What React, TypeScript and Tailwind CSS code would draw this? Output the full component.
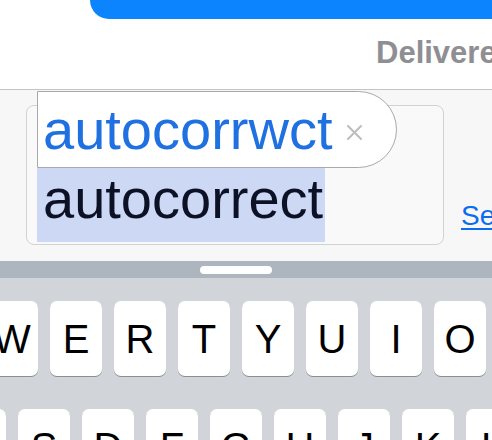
import React from 'react';

const row1 = ['Q', 'W', 'E', 'R', 'T', 'Y', 'U', 'I', 'O', 'P'];
const row2 = ['A', 'S', 'D', 'F', 'G', 'H', 'J', 'K', 'L'];

const Key = ({ label }: { label: string }) => (
  <div className="w-[52px] h-[75px] shrink-0 rounded-[7px] bg-white shadow-[0_1px_0_#8b8d92] flex items-center justify-center text-[40px] leading-none text-black">
    {label}
  </div>
);

export default function App() {
  return (
    <div className="w-[492px] h-[440px] overflow-hidden bg-white font-['Liberation_Sans',Arial,sans-serif]">
      {/* message area */}
      <div className="h-[89px]">
        <div className="ml-[90px] h-[19px] w-[440px] bg-[#0b84fe] rounded-bl-[24px]" />
        <div className="mt-[18px] pl-[376px] whitespace-nowrap text-[31px] leading-none font-semibold text-[#8e8e93]">
          Delivered
        </div>
      </div>
      <div className="h-px bg-[#c4c4c4]" />

      {/* text input area */}
      <div className="relative h-[171px] bg-[#f7f7f7] flex items-start">
        <div className="ml-[26px] mt-[15px] w-[418px] h-[140px] shrink-0 rounded-[8px] border border-[#d2d2d2] bg-[#f9f9f9] pl-[10px] pt-[62px]">
          <div className="w-[288px] h-[74px] bg-[#cdd8f4] pl-[6px] pt-[3px] text-[56px] leading-none text-[#0c1126] whitespace-nowrap">
            autocorrect
          </div>
        </div>
        <div className="ml-[17px] mt-[112px] text-[28px] leading-none text-[#0a6cf0] underline decoration-2 underline-offset-[3px] whitespace-nowrap">
          Send
        </div>

        {/* autocorrect popup */}
        <div className="absolute left-[37px] top-[1px] w-[360px] h-[77px] bg-white border border-[#a9a9a9] rounded-r-[39px] flex items-start pl-[5px] pt-[10px]">
          <span className="text-[56px] leading-none text-[#1f70e0] whitespace-nowrap">autocorrwct</span>
          <svg className="ml-[14px] mt-[22px]" width="17" height="17" viewBox="0 0 17 17">
            <path d="M2 2 L15 15 M15 2 L2 15" stroke="#bdbdbd" strokeWidth="2" strokeLinecap="round" />
          </svg>
        </div>
      </div>

      {/* keyboard */}
      <div className="h-[17px] bg-[#adb5bf] pt-[5px] pl-[200px]">
        <div className="w-[72px] h-[8px] rounded-full bg-white" />
      </div>
      <div className="h-[162px] bg-[#d1d5da] pt-[23px] overflow-hidden">
        <div className="flex gap-[12px] ml-[-78px]">
          {row1.map((k) => (
            <Key key={k} label={k} />
          ))}
        </div>
        <div className="flex gap-[12px] ml-[-46px] mt-[33px]">
          {row2.map((k) => (
            <Key key={k} label={k} />
          ))}
        </div>
      </div>
    </div>
  );
}
